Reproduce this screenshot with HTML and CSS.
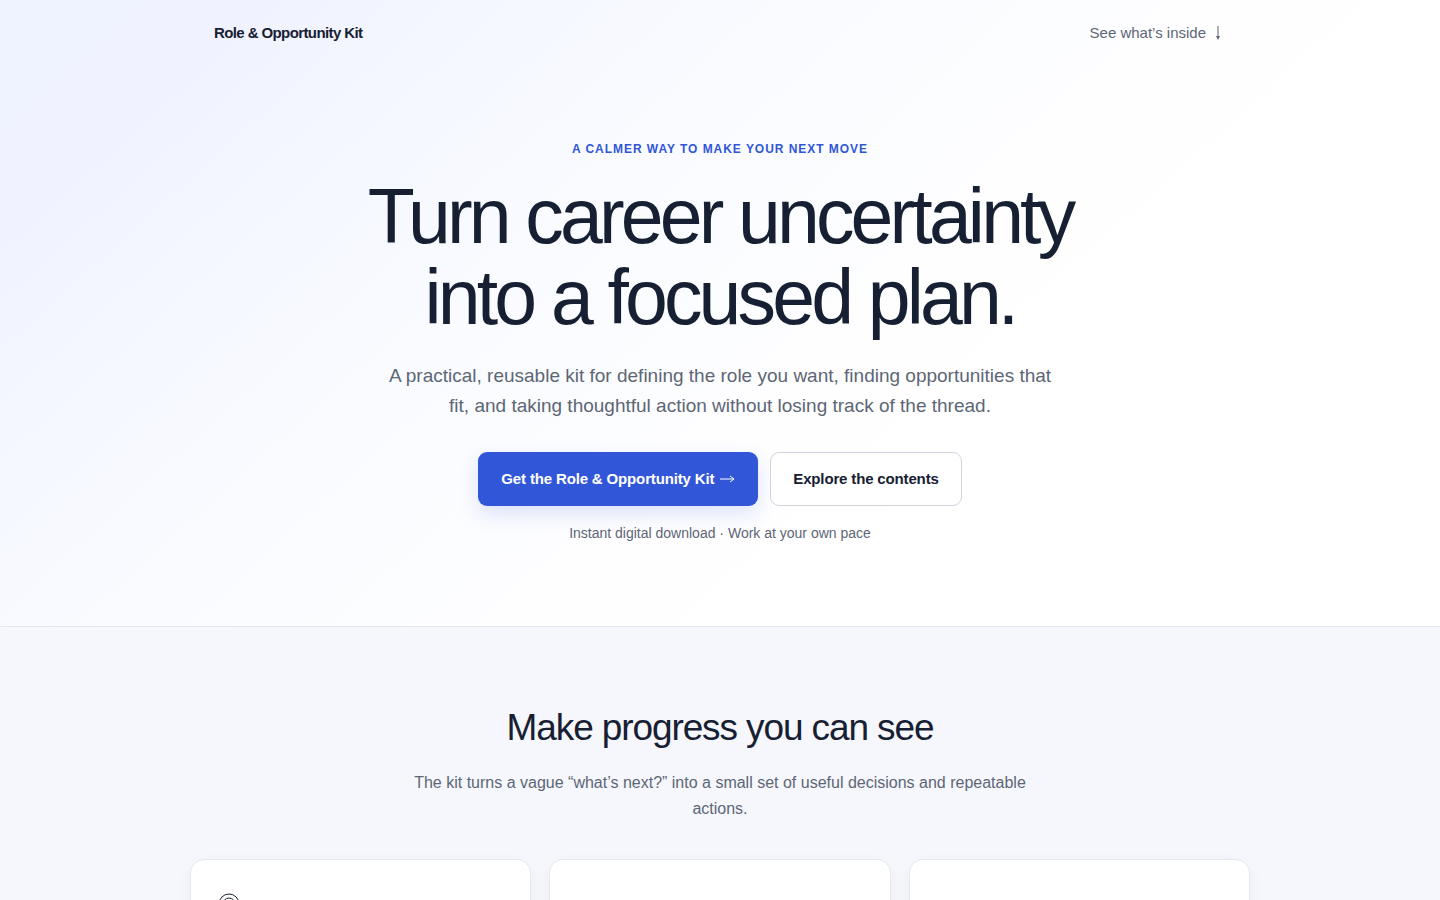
FILE: index.html
```html
<!DOCTYPE html>
<html lang="en">
<head>
    <meta charset="UTF-8">
    <meta name="viewport" content="width=device-width, initial-scale=1.0">
    <title>Role &amp; Opportunity Kit</title>
    <link rel="stylesheet" href="styles.css">
</head>
<body>
<header class="hero">
    <nav class="nav">
        <a class="brand" href="#">Role &amp; Opportunity Kit</a>
        <a class="nav-link" href="#inside">See what’s inside
            <svg class="down" viewBox="0 0 8 16" aria-hidden="true"><path d="M4 1v12"/><path class="tip" d="M2 11h4L4 15z"/></svg>
        </a>
    </nav>
    <div class="hero-content">
        <p class="eyebrow">A calmer way to make your next move</p>
        <h1>Turn career uncertainty into a focused plan.</h1>
        <p class="lead">A practical, reusable kit for defining the role you want, finding opportunities that fit, and taking thoughtful action without losing track of the thread.</p>
        <div class="actions">
            <a class="button primary" href="#get">Get the Role &amp; Opportunity Kit
                <svg class="right" viewBox="0 0 16 10" aria-hidden="true"><path d="M1 5h14M11 2l4 3L11 8"/></svg>
            </a>
            <a class="button secondary" href="#inside">Explore the contents</a>
        </div>
        <p class="note">Instant digital download · Work at your own pace</p>
    </div>
</header>

<main>
    <section class="benefits" id="inside">
        <div class="section-heading">
            <h2>Make progress you can see</h2>
            <p>The kit turns a vague “what’s next?” into a small set of useful decisions and repeatable actions.</p>
        </div>
        <div class="cards">
            <article class="card">
                <svg class="card-icon" viewBox="0 0 22 22" aria-hidden="true"><circle cx="11" cy="11" r="10"/><circle cx="11" cy="11" r="6"/></svg>
            </article>
            <article class="card"></article>
            <article class="card"></article>
        </div>
    </section>
</main>
</body>
</html>
```
FILE: styles.css
```css
:root {
    --ink: #172033;
    --muted: #5d6675;
    --blue: #3156d8;
    --line: #e3e7ef;
}

* {
    box-sizing: border-box;
}

body {
    margin: 0;
    background: #fff;
    color: var(--ink);
    font-family: "Liberation Sans", Arial, sans-serif;
    font-size: 16px;
    line-height: 26px;
}

a {
    color: inherit;
    text-decoration: none;
}

svg {
    fill: none;
    stroke: currentColor;
}

.hero {
    background: linear-gradient(138deg, #eef4ff 0%, #f0f2ff 12%, #f4f7ff 22%, #f9fbff 38%, #fefeff 58%, #fff 70%);
    border-bottom: 1px solid var(--line);
}

.nav {
    display: flex;
    justify-content: space-between;
    align-items: center;
    max-width: 1060px;
    margin: 0 auto;
    padding: 20px 24px;
}

.brand {
    font-weight: bold;
    font-size: 15px;
    letter-spacing: -0.04em;
}

.nav-link {
    display: flex;
    align-items: center;
    gap: 8px;
    padding-right: 4px;
    color: var(--muted);
    font-size: 15px;
}

.down {
    width: 8px;
    height: 16px;
}

.tip {
    fill: currentColor;
    stroke: none;
}

.hero-content {
    max-width: 808px;
    margin: 0 auto;
    padding: 70px 24px 80px;
    text-align: center;
}

.eyebrow {
    margin: 0 0 14px;
    color: var(--blue);
    font-size: 12px;
    font-weight: bold;
    letter-spacing: 0.08em;
    text-transform: uppercase;
}

h1 {
    margin: 0 0 23px;
    font-size: 77px;
    font-weight: normal;
    line-height: 81px;
    letter-spacing: -0.05em;
}

.lead {
    max-width: 680px;
    margin: 0 auto 31px;
    color: var(--muted);
    font-size: 19px;
    line-height: 30px;
}

.actions {
    display: flex;
    flex-wrap: wrap;
    justify-content: center;
    gap: 12px;
}

.button {
    display: flex;
    align-items: center;
    gap: 5px;
    padding: 13px 22px;
    border: 1px solid transparent;
    border-radius: 9px;
    font-size: 15px;
    font-weight: bold;
    letter-spacing: -0.01em;
}

.primary {
    background: var(--blue);
    color: #fff;
    box-shadow: 0 8px 20px rgba(49, 86, 216, 0.16);
}

.secondary {
    background: #fff;
    border-color: #d0d5dd;
}

.right {
    width: 16px;
    height: 10px;
}

.note {
    margin: 14px 0 0;
    color: var(--muted);
    font-size: 14px;
}

.benefits {
    padding: 76px 24px;
    background: #f5f7fc;
}

.section-heading {
    max-width: 640px;
    margin: 0 auto 37px;
    text-align: center;
}

h2 {
    margin: 0 0 17px;
    font-size: 37px;
    font-weight: normal;
    line-height: 50px;
    letter-spacing: -0.03em;
}

.section-heading p {
    margin: 0;
    color: var(--muted);
}

.cards {
    display: grid;
    grid-template-columns: repeat(3, 1fr);
    gap: 18px;
    max-width: 1060px;
    margin: 0 auto;
}

.card {
    min-height: 220px;
    padding: 33px 27px;
    background: #fff;
    border: 1px solid var(--line);
    border-radius: 14px;
    box-shadow: 0 4px 16px rgba(23, 32, 51, 0.04);
}

.card-icon {
    display: block;
    width: 22px;
    height: 22px;
}

@media (max-width: 768px) {
    h1 {
        font-size: 46px;
        line-height: 50px;
    }
    .cards {
        grid-template-columns: 1fr;
    }
}
```
